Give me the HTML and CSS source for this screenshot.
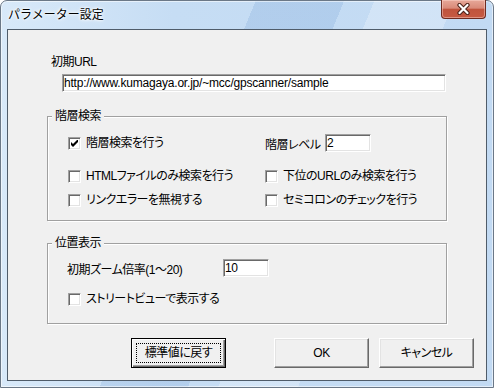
FILE: index.html
```html
<!DOCTYPE html>
<html lang="ja">
<head>
    <meta charset="UTF-8">
    <title>パラメーター設定</title>
    <link rel="stylesheet" href="styles.css">
</head>
<body>
    <div class="window">
        <!-- タイトルバー -->
        <div class="titlebar">
            <span class="title">パラメーター設定</span>
            <div class="close-btn">
                <svg width="15" height="12" viewBox="0 0 15 12">
                    <path d="M3.5 2 L11.5 10 M11.5 2 L3.5 10" stroke="#4a2018" stroke-width="4.2" stroke-linecap="round"/>
                    <path d="M3.5 2 L11.5 10 M11.5 2 L3.5 10" stroke="#fff" stroke-width="2.2" stroke-linecap="round"/>
                </svg>
            </div>
        </div>

        <div class="client">
            <!-- 初期URL -->
            <div class="url-label">初期URL</div>
            <div class="textbox url-box">http://www.kumagaya.or.jp/~mcc/gpscanner/sample</div>

            <!-- 階層検索 -->
            <div class="group group-search">
                <span class="group-title">階層検索</span>
                <div class="row row-1">
                    <div class="col-left check-item">
                        <span class="check">
                            <svg width="7" height="7" viewBox="0 0 7 7"><path d="M0 2 L2 4 L6 0 L7 0 L7 2 L2 7 L0 5 Z" fill="#000"/></svg>
                        </span>
                        <span>階層検索を行う</span>
                    </div>
                    <div class="level">
                        <span class="level-label">階層レベル</span>
                        <span class="textbox level-box">2</span>
                    </div>
                </div>
                <div class="row row-2">
                    <div class="col-left check-item"><span class="check"></span><span>HTMLファイルのみ検索を行う</span></div>
                    <div class="check-item"><span class="check"></span><span>下位のURLのみ検索を行う</span></div>
                </div>
                <div class="row row-3">
                    <div class="col-left check-item"><span class="check"></span><span>リンクエラーを無視する</span></div>
                    <div class="check-item"><span class="check"></span><span>セミコロンのチェックを行う</span></div>
                </div>
            </div>

            <!-- 位置表示 -->
            <div class="group group-position">
                <span class="group-title">位置表示</span>
                <div class="row row-zoom">
                    <span class="zoom-label">初期ズーム倍率(1～20)</span>
                    <span class="textbox zoom-box">10</span>
                </div>
                <div class="row row-street">
                    <div class="check-item"><span class="check"></span><span>ストリートビューで表示する</span></div>
                </div>
            </div>

            <!-- ボタン -->
            <div class="buttons">
                <div class="btn btn-default">標準値に戻す</div>
                <div class="btn btn-ok">OK</div>
                <div class="btn btn-cancel">キャンセル</div>
            </div>
        </div>
    </div>
</body>
</html>
```
FILE: styles.css
```css
/* 全体 */
* {
    box-sizing: border-box;
    margin: 0;
    padding: 0;
}

body {
    background: #fff;
    font-family: "Liberation Sans", "Noto Sans CJK JP", sans-serif;
    font-size: 12px;
    font-feature-settings: "palt";
    letter-spacing: -0.5px;
    color: #000;
}

/* ウィンドウ枠 */
.window {
    width: 494px;
    height: 388px;
    border: 1px solid #6b7887;
    border-radius: 7px 7px 0 0;
    padding: 0 6px 6px;
    display: flex;
    flex-direction: column;
    background:
        linear-gradient(112deg, transparent 0 236px, rgba(110, 155, 210, 0.22) 236px 318px, transparent 318px 346px, rgba(255, 255, 255, 0.25) 346px 420px, transparent 420px),
        linear-gradient(to right, #d8e9f9, #c6ddf4 35%, #c2daf3 100%);
    box-shadow: inset 0 0 0 1px rgba(255, 255, 255, 0.55);
}

.titlebar {
    height: 28px;
    display: flex;
    justify-content: space-between;
    align-items: flex-start;
}

.title {
    padding: 5px 0 0 1px;
    font-family: "Noto Sans CJK JP", sans-serif;
    font-feature-settings: normal;
    font-size: 12px;
    line-height: 16px;
    letter-spacing: 0;
    color: #000;
    text-shadow: 0 0 5px #fff, 0 0 3px #fff, 0 0 2px #fff;
}

.close-btn {
    width: 45px;
    height: 19px;
    margin: -1px 1px 0 0;
    display: flex;
    align-items: center;
    justify-content: center;
    border: 1px solid #6e2b20;
    border-top: none;
    border-radius: 0 0 4px 4px;
    background: linear-gradient(#e7a899, #d98a79 45%, #c0543d 52%, #c65a42 100%);
    box-shadow: inset 0 0 0 1px rgba(255, 220, 210, 0.45);
}

.client {
    flex: 1;
    background: #f0f0f0;
    border: 1px solid #4f5c6a;
    display: flex;
    flex-direction: column;
    align-items: flex-start;
}

/* テキストボックス */
.textbox {
    display: block;
    height: 18px;
    padding-left: 1px;
    line-height: 16px;
    background: #fff;
    border: 1px solid;
    border-color: #a0a0a0 #fff #fff #a0a0a0;
    box-shadow: inset 1px 1px 0 #696969, inset -1px -1px 0 #e3e3e3;
    white-space: nowrap;
}

.url-label {
    margin: 24px 0 0 43px;
    line-height: 16px;
}

.url-box {
    margin: 4px 0 0 54px;
    width: 384px;
    letter-spacing: -0.2px;
}

/* グループボックス */
.group {
    position: relative;
    width: 400px;
    margin-left: 39px;
    padding-left: 20px;
    border: 1px solid #a0a0a0;
    box-shadow: 1px 1px 0 #fff, inset 1px 1px 0 #fff;
}

.group-title {
    position: absolute;
    top: -9px;
    left: 4px;
    padding: 0 3px;
    line-height: 16px;
    background: #f0f0f0;
}

.group-search {
    margin-top: 24px;
    height: 105px;
    padding-top: 16px;
}

.group-position {
    margin-top: 22px;
    height: 81px;
    padding-top: 14px;
}

.row {
    display: flex;
    align-items: center;
    height: 20px;
}

.row-2 {
    margin-top: 13px;
}

.row-3 {
    margin-top: 4px;
}

.row-street {
    margin-top: 11px;
}

.col-left {
    width: 197px;
}

/* チェックボックス */
.check-item {
    display: flex;
    align-items: center;
    gap: 5px;
    line-height: 16px;
}

.check {
    width: 13px;
    height: 13px;
    display: flex;
    align-items: center;
    justify-content: center;
    background: #fff;
    border: 1px solid;
    border-color: #a0a0a0 #fff #fff #a0a0a0;
    box-shadow: inset 1px 1px 0 #696969, inset -1px -1px 0 #e3e3e3;
}

.level {
    display: flex;
    align-items: center;
}

.level-label {
    width: 60px;
}

.level-box {
    width: 46px;
}

.zoom-label {
    width: 156px;
    margin-left: -1px;
}

.zoom-box {
    width: 46px;
}

/* ボタン */
.buttons {
    display: flex;
    margin: 14px 0 0 123px;
}

.btn {
    position: relative;
    width: 95px;
    height: 30px;
    display: flex;
    align-items: center;
    justify-content: center;
    background: #f0f0f0;
    border: 1px solid;
    border-color: #fff #696969 #696969 #fff;
    box-shadow: inset -1px -1px 0 #a0a0a0, inset 1px 1px 0 #e3e3e3;
    line-height: 16px;
}

.btn-default {
    border: 1px solid #000;
    box-shadow: inset 1px 1px 0 #fff, inset -1px -1px 0 #696969, inset -2px -2px 0 #a0a0a0;
}

.btn-default::after {
    content: "";
    position: absolute;
    inset: 4px;
    border: 1px dotted #000;
}

.btn-ok {
    margin-left: 48px;
}

.btn-cancel {
    margin-left: 10px;
}
```
